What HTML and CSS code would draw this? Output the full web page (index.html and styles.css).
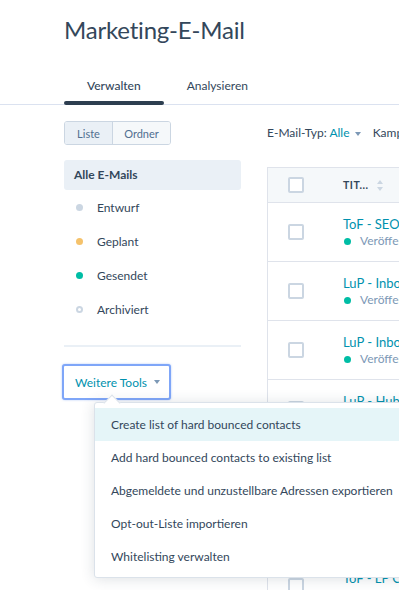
FILE: index.html
```html
<!DOCTYPE html>
<html lang="de">
<head>
  <meta charset="UTF-8" />
  <meta name="viewport" content="width=device-width, initial-scale=1.0"/>
  <title>Marketing-E-Mail</title>
  <link rel="stylesheet" href="styles.css">
</head>
<body>

  <header class="page-header">
    <h1>Marketing-E-Mail</h1>
  </header>

  <nav class="tabs">
    <a class="tab active">Verwalten</a>
    <a class="tab">Analysieren</a>
  </nav>

  <div class="content">
    <aside class="sidebar">
      <div class="view-toggle">
        <span class="seg active">Liste</span>
        <span class="seg">Ordner</span>
      </div>

      <div class="filter-all">Alle E-Mails</div>
      <ul class="state-list">
        <li><span class="dot draft"></span>Entwurf</li>
        <li><span class="dot scheduled"></span>Geplant</li>
        <li><span class="dot sent"></span>Gesendet</li>
        <li><span class="dot archived"></span>Archiviert</li>
      </ul>

      <hr class="divider">

      <div class="tools">
        <button class="tools-btn">Weitere Tools <span class="caret"></span></button>
        <div class="dropdown">
          <div class="dd-item hover">Create list of hard bounced contacts</div>
          <div class="dd-item">Add hard bounced contacts to existing list</div>
          <div class="dd-item">Abgemeldete und unzustellbare Adressen exportieren</div>
          <div class="dd-item">Opt-out-Liste importieren</div>
          <div class="dd-item">Whitelisting verwalten</div>
        </div>
      </div>
    </aside>

    <main class="main">
      <div class="filters">
        E-Mail-Typ: <span class="link">Alle</span> <span class="caret"></span>
        <span class="filter-next">Kampagne</span>
      </div>

      <div class="table">
        <div class="row head">
          <div class="cell check"><span class="checkbox"></span></div>
          <div class="cell title-col">TIT... <span class="sort"></span></div>
        </div>
        <div class="row">
          <div class="cell check"><span class="checkbox"></span></div>
          <div class="cell title-col">
            <div class="mail-name">ToF - SEO Tipps</div>
            <div class="mail-state"><span class="dot sent"></span>Veröffentlicht</div>
          </div>
        </div>
        <div class="row">
          <div class="cell check"><span class="checkbox"></span></div>
          <div class="cell title-col">
            <div class="mail-name">LuP - Inbound</div>
            <div class="mail-state"><span class="dot sent"></span>Veröffentlicht</div>
          </div>
        </div>
        <div class="row">
          <div class="cell check"><span class="checkbox"></span></div>
          <div class="cell title-col">
            <div class="mail-name">LuP - Inbound</div>
            <div class="mail-state"><span class="dot sent"></span>Veröffentlicht</div>
          </div>
        </div>
        <div class="row">
          <div class="cell check"><span class="checkbox"></span></div>
          <div class="cell title-col">
            <div class="mail-name">LuP - HubSpot</div>
            <div class="mail-state"><span class="dot sent"></span>Veröffentlicht</div>
          </div>
        </div>
        <div class="row">
          <div class="cell check"><span class="checkbox"></span></div>
          <div class="cell title-col">
            <div class="mail-name">ToF - Blog</div>
            <div class="mail-state"><span class="dot sent"></span>Veröffentlicht</div>
          </div>
        </div>
        <div class="row">
          <div class="cell check"><span class="checkbox"></span></div>
          <div class="cell title-col">
            <div class="mail-name">ToF - Blog</div>
            <div class="mail-state"><span class="dot sent"></span>Veröffentlicht</div>
          </div>
        </div>
        <div class="row">
          <div class="cell check"><span class="checkbox"></span></div>
          <div class="cell title-col">
            <div class="mail-name">ToF - LP Content</div>
            <div class="mail-state"><span class="dot sent"></span>Veröffentlicht</div>
          </div>
        </div>
      </div>
    </main>
  </div>

</body>
</html>
```

FILE: styles.css
```css
* {
  margin: 0;
  padding: 0;
  box-sizing: border-box;
}
body {
  font-family: 'Lato', 'Open Sans', sans-serif;
  color: #33475b;
  background: #fff;
  overflow: hidden;
  height: 590px;
}
.page-header h1 {
  font-size: 24px;
  font-weight: 400;
  line-height: 32px;
  margin: 14px 0 0 64px;
  letter-spacing: -0.2px;
}
.tabs {
  display: flex;
  margin-top: 20px;
  padding-left: 64px;
  border-bottom: 1px solid #dbe2f0;
}
.tab {
  position: relative;
  padding: 10px 23px 9px;
  margin-bottom: -1px;
  font-size: 12px;
  line-height: 20px;
  color: #33475b;
}
.tab.active {
  font-weight: 500;
}
.tab.active::after {
  content: "";
  position: absolute;
  left: 0;
  right: 0;
  bottom: 0;
  height: 4px;
  border-radius: 2px;
  background: #2d3e50;
}
.content {
  display: flex;
  gap: 26px;
  padding-left: 64px;
}
.sidebar {
  width: 177px;
  flex: none;
  padding-top: 16px;
}
.view-toggle {
  display: inline-flex;
  height: 24px;
  border: 1px solid #cbd6e2;
  border-radius: 3px;
  overflow: hidden;
  font-size: 11px;
}
.seg {
  display: flex;
  align-items: center;
  justify-content: center;
  background: #f5f8fa;
  color: #516f90;
}
.seg:first-child {
  width: 48px;
  border-right: 1px solid #cbd6e2;
}
.seg:last-child {
  width: 57px;
}
.seg.active {
  background: #eaf0f6;
}
.filter-all {
  margin-top: 15px;
  height: 30px;
  line-height: 30px;
  padding-left: 10px;
  background: #eaf0f6;
  border-radius: 3px;
  font-size: 12px;
  font-weight: 700;
}
.state-list {
  list-style: none;
}
.state-list li {
  display: flex;
  align-items: center;
  height: 34px;
  padding-left: 12px;
  font-size: 12px;
}
.dot {
  display: inline-block;
  width: 7px;
  height: 7px;
  border-radius: 50%;
  flex: none;
}
.state-list .dot {
  margin-right: 14px;
}
.dot.draft { background: #cbd6e2; }
.dot.scheduled { background: #f5c26b; }
.dot.sent { background: #00bda5; }
.dot.archived { border: 2px solid #cbd6e2; background: #fff; }
.divider {
  border: none;
  border-top: 2px solid #eaf0f6;
  margin-top: 19px;
}
.tools {
  position: relative;
  margin-top: 17px;
  margin-left: -2px;
}
.tools-btn {
  width: 109px;
  height: 36px;
  background: #fff;
  border: 2px solid #7fa6f8;
  border-radius: 3px;
  box-shadow: 0 0 2px rgba(90, 140, 245, 0.5);
  font-family: 'Lato', 'Open Sans', sans-serif;
  font-size: 12px;
  color: #0091ae;
  text-align: left;
  padding-left: 11px;
  display: flex;
  align-items: center;
  white-space: nowrap;
}
.caret {
  display: inline-block;
  width: 0;
  height: 0;
  border-left: 3.5px solid transparent;
  border-right: 3.5px solid transparent;
  border-top: 4px solid #7c98b6;
  margin-left: 7px;
  vertical-align: middle;
}
.dropdown {
  position: absolute;
  left: 32px;
  top: 38px;
  width: 330px;
  background: #fff;
  border: 1px solid #dbe2ea;
  border-radius: 3px;
  box-shadow: 0 1px 14px rgba(45, 62, 80, 0.16);
  padding: 5px 0 4px;
  z-index: 10;
}
.dropdown::before {
  content: "";
  position: absolute;
  left: 11px;
  top: -6px;
  width: 11px;
  height: 11px;
  background: #fff;
  border-left: 1px solid #dbe2ea;
  border-top: 1px solid #dbe2ea;
  transform: rotate(45deg);
}
.dd-item {
  position: relative;
  height: 33px;
  line-height: 33px;
  padding-left: 16px;
  font-size: 12px;
  white-space: nowrap;
}
.dd-item.hover {
  background: #e5f5f8;
}
.main {
  flex: none;
  width: 420px;
}
.filters {
  padding-top: 18px;
  height: 62px;
  font-size: 12px;
  line-height: 20px;
  white-space: nowrap;
}
.filters .link {
  color: #0091ae;
}
.filters .caret {
  margin-left: 2px;
}
.filter-next {
  margin-left: 9px;
}
.table {
  border: 1px solid #dfe3eb;
  border-right: none;
}
.row {
  display: flex;
  height: 59px;
  border-bottom: 1px solid #dfe3eb;
}
.row.head {
  height: 35px;
  background: #f5f8fa;
  align-items: center;
}
.cell.check {
  width: 56px;
  padding-left: 20px;
  display: flex;
  align-items: center;
}
.row:not(.head) .cell.check {
  align-items: flex-start;
  padding-top: 21px;
}
.checkbox {
  display: block;
  width: 16px;
  height: 16px;
  border: 2px solid #cbd6e2;
  border-radius: 2px;
  background: #fff;
}
.title-col {
  padding-left: 19px;
  font-size: 12px;
}
.head .title-col {
  font-size: 10.5px;
  font-weight: 700;
  letter-spacing: 0.5px;
  display: flex;
  align-items: center;
}
.sort {
  display: inline-block;
  width: 7px;
  height: 11px;
  margin-left: 8px;
  position: relative;
}
.sort::before, .sort::after {
  content: "";
  position: absolute;
  left: 0;
  border-left: 3.5px solid transparent;
  border-right: 3.5px solid transparent;
}
.sort::before {
  top: 0;
  border-bottom: 4px solid #cbd6e2;
}
.sort::after {
  bottom: 0;
  border-top: 4px solid #cbd6e2;
}
.row:not(.head) .title-col {
  padding-top: 12px;
}
.mail-name {
  color: #0091ae;
  font-size: 13px;
  line-height: 18px;
  white-space: nowrap;
}
.mail-state {
  display: flex;
  align-items: center;
  color: #7c98b6;
  font-size: 12px;
  line-height: 16px;
  white-space: nowrap;
}
.mail-state .dot {
  margin: 0 9px 0 1px;
}
```
